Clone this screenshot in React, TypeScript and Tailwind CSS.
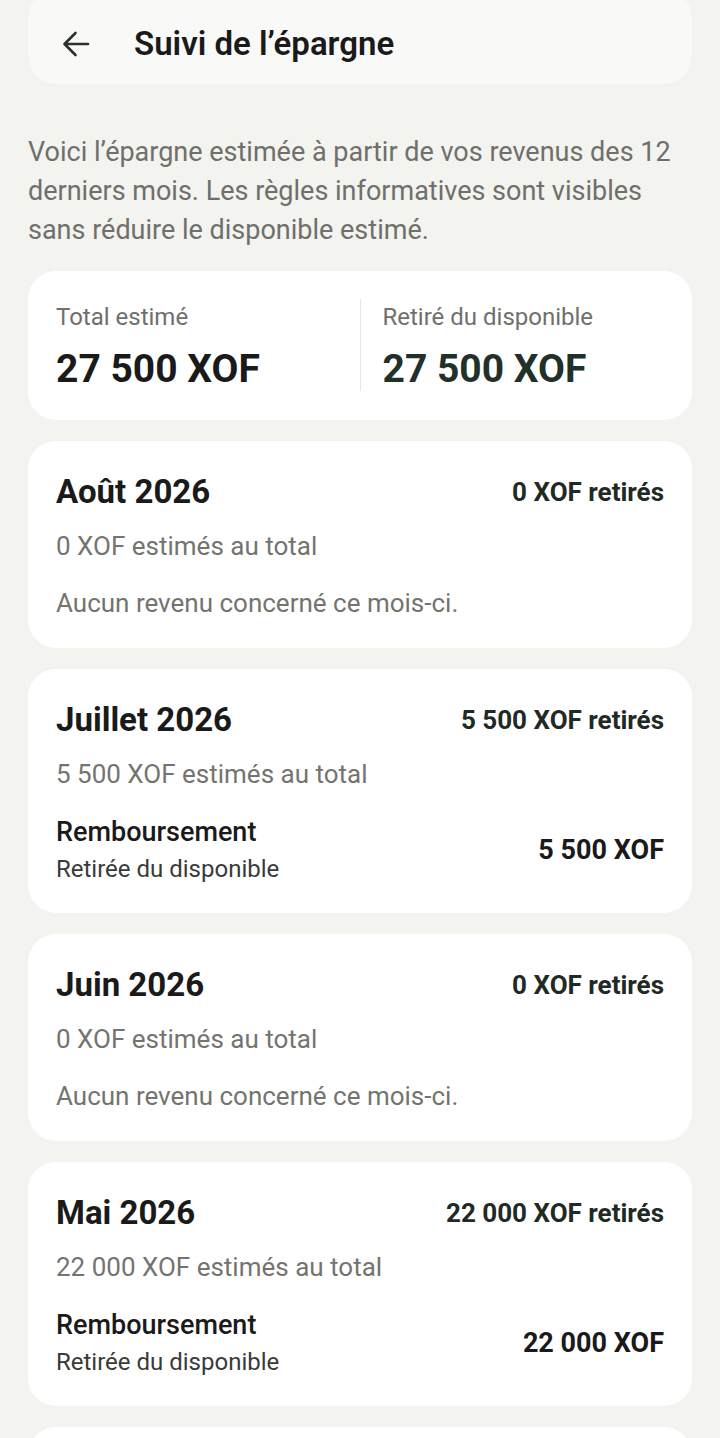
import React from "react";

type Entry = { label: string; sub: string; amount: string };
type Month = { title: string; retired: string; total: string; entries: Entry[] };

const months: Month[] = [
  { title: "Août 2026", retired: "0 XOF retirés", total: "0 XOF estimés au total", entries: [] },
  {
    title: "Juillet 2026",
    retired: "5 500 XOF retirés",
    total: "5 500 XOF estimés au total",
    entries: [{ label: "Remboursement", sub: "Retirée du disponible", amount: "5 500 XOF" }],
  },
  { title: "Juin 2026", retired: "0 XOF retirés", total: "0 XOF estimés au total", entries: [] },
  {
    title: "Mai 2026",
    retired: "22 000 XOF retirés",
    total: "22 000 XOF estimés au total",
    entries: [{ label: "Remboursement", sub: "Retirée du disponible", amount: "22 000 XOF" }],
  },
];

function MonthCard({ m }: { m: Month }) {
  return (
    <div className="bg-white rounded-[28px] px-[28px] pt-[28px] pb-[29px]">
      <div className="flex items-center justify-between">
        <div className="text-[33px] leading-[46px] font-bold text-[#1a1a1a]">{m.title}</div>
        <div className="text-[26px] leading-[46px] font-bold text-[#1f2a25]">{m.retired}</div>
      </div>
      <div className="mt-[15px] text-[26px] leading-[32px] text-[#74746f]">{m.total}</div>
      {m.entries.length === 0 ? (
        <div className="mt-[25px] text-[26px] leading-[32px] text-[#74746f]">
          Aucun revenu concerné ce mois-ci.
        </div>
      ) : (
        m.entries.map((e, i) => (
          <div key={i} className="mt-[26px] flex items-center justify-between">
            <div className="flex flex-col">
              <div className="text-[27px] leading-[32px] font-medium text-[#1a1a1a]">{e.label}</div>
              <div className="mt-[6px] text-[24px] leading-[30px] text-[#3a3a38]">{e.sub}</div>
            </div>
            <div className="text-[27px] leading-[36px] font-bold text-[#1a1a1a]">{e.amount}</div>
          </div>
        ))
      )}
    </div>
  );
}

export default function App() {
  return (
    <div
      className="h-[1438px] bg-[#f3f3ef] px-[28px] overflow-hidden"
      style={{ fontFamily: "Roboto, 'Noto Sans', sans-serif" }}
    >
      <div className="-mt-[10px] h-[94px] pt-[14px] bg-[#f9f9f7] rounded-[28px] flex items-center">
        <div className="ml-[34px] w-[28px] h-[28px] flex items-center justify-center">
          <svg width="28" height="28" viewBox="0 0 28 28" fill="none">
            <path
              d="M26 14H2.5M13.5 3L2.5 14L13.5 25"
              stroke="#28332e"
              strokeWidth="2.6"
              strokeLinecap="round"
              strokeLinejoin="round"
            />
          </svg>
        </div>
        <div className="ml-[44px] text-[33px] leading-[40px] font-semibold text-[#1a1a1a]">
          Suivi de l’épargne
        </div>
      </div>

      <p className="mt-[49px] text-[27px] leading-[39px] text-[#6f6f6b]">
        Voici l’épargne estimée à partir de vos revenus des 12 derniers mois. Les règles informatives
        sont visibles sans réduire le disponible estimé.
      </p>

      <div className="mt-[21px] bg-white rounded-[28px] px-[28px] pt-[28px] pb-[29px] grid grid-cols-[1fr_1px_1fr]">
        <div className="pt-[4px]">
          <div className="text-[24px] leading-[28px] text-[#6f6f6b]">Total estimé</div>
          <div className="mt-[16px] text-[39px] leading-[44px] font-bold text-[#1a1a1a]">27 500 XOF</div>
        </div>
        <div className="bg-[#e6e6e1]" />
        <div className="pl-[22px] pt-[4px]">
          <div className="text-[24px] leading-[28px] text-[#6f6f6b]">Retiré du disponible</div>
          <div className="mt-[16px] text-[39px] leading-[44px] font-bold text-[#22302a]">27 500 XOF</div>
        </div>
      </div>

      <div className="mt-[21px] flex flex-col gap-[21px]">
        {months.map((m, i) => (
          <MonthCard key={i} m={m} />
        ))}
        <div className="bg-white rounded-[28px] h-[207px]" />
      </div>
    </div>
  );
}
